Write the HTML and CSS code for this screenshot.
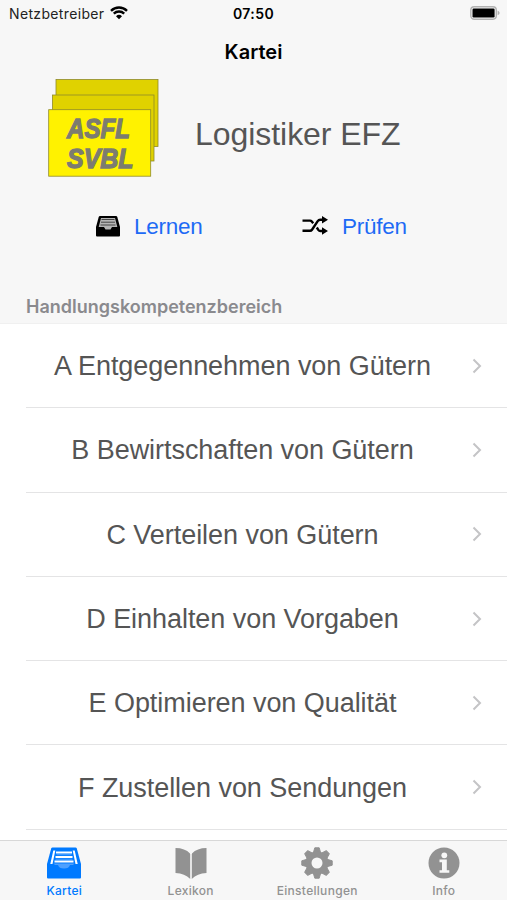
FILE: index.html
```html
<!DOCTYPE html>
<html lang="de">
<head>
    <meta charset="UTF-8">
    <meta name="viewport" content="width=device-width, initial-scale=1.0">
    <title>Kartei</title>
    <link rel="stylesheet" href="styles.css">
</head>
<body>

<div class="app">
    <div class="status-bar">
        <div class="carrier">
            <span>Netzbetreiber</span>
            <svg class="wifi" viewBox="0 0 18 14" width="18" height="14">
                <path d="M1 4.8a11.5 11.5 0 0 1 16 0M3.8 7.7a7.4 7.4 0 0 1 10.4 0" fill="none" stroke="#000" stroke-width="2.4"/>
                <path d="M6 10.2a4.3 4.3 0 0 1 6 0l-3 3z"/>
            </svg>
        </div>
        <div class="time">07:50</div>
        <svg class="battery" viewBox="0 0 31 14" width="31" height="14">
            <rect x="1.8" y=".8" width="25.5" height="12.4" rx="3.4" fill="#f7f7f7" stroke="#b2b2b2" stroke-width="1.4"/>
            <rect x="3.5" y="2.5" width="22.1" height="9" rx="1.2"/>
            <path d="M28.6 4.8c2.6.7 2.6 3.7 0 4.4z" fill="#b2b2b2"/>
        </svg>
    </div>

    <h1 class="nav-title">Kartei</h1>

    <div class="profile">
        <svg class="logo" viewBox="0 0 112 100" width="112" height="100">
            <g stroke="#8f8a2a" stroke-width=".8">
                <rect x="8" y="1.5" width="102" height="67" fill="#e0d200"/>
                <rect x="4.5" y="17" width="101.5" height="66" fill="#e0d200"/>
                <rect x=".7" y="31.7" width="102" height="66.5" fill="#fff200"/>
            </g>
            <g class="logo-text">
                <text x="19" y="59.8" textLength="63" lengthAdjust="spacingAndGlyphs">ASFL</text>
                <text x="19" y="89.5" textLength="66.5" lengthAdjust="spacingAndGlyphs">SVBL</text>
            </g>
        </svg>
        <div class="profession">Logistiker EFZ</div>
    </div>

    <div class="actions">
        <a class="action learn">
            <svg viewBox="0 0 24 22" width="24" height="22">
                <path d="M4 1h16q1 0 1.300 1L24 12v8.500q0 1-1 1H1q-1 0-1-1V12L2.700 2Q3 1 4 1z"/>
                <path d="M5 3h14l2.300 9H16l-1.500 2.500h-5L8 12H2.700z" fill="#b5b5b5"/>
                <path d="M5.500 4.500h13M5 7.200h14M4.500 10h15" stroke="#444" stroke-width="1"/>
            </svg>
            <span>Lernen</span>
        </a>
        <a class="action">
            <svg viewBox="0 0 26 20" width="26" height="20">
                <path d="M.5 4.600H8q1 0 1.800 1l1.400 1.700M.5 14.700H8q1.300 0 2-1l5.700-8.500q1-1.500 2.500-1.500H21M14.800 11.500l1.500 2.400q.8 1.100 2 1.100H21" fill="none" stroke="#000" stroke-width="2.400"/>
                <path d="M20 0l6 3.800-6 3.800zM20 11.200l6 3.800-6 3.800z"/>
            </svg>
            <span>Prüfen</span>
        </a>
    </div>

    <h2 class="section-title">Handlungskompetenzbereich</h2>

    <ul class="areas">
        <li><span>A Entgegennehmen von Gütern</span><svg class="chevron" viewBox="0 0 10 16" width="10" height="16"><path d="M1.500 1.500L8 8l-6.500 6.500"/></svg></li>
        <li><span>B Bewirtschaften von Gütern</span><svg class="chevron" viewBox="0 0 10 16" width="10" height="16"><path d="M1.500 1.500L8 8l-6.500 6.500"/></svg></li>
        <li><span>C Verteilen von Gütern</span><svg class="chevron" viewBox="0 0 10 16" width="10" height="16"><path d="M1.500 1.500L8 8l-6.500 6.500"/></svg></li>
        <li><span>D Einhalten von Vorgaben</span><svg class="chevron" viewBox="0 0 10 16" width="10" height="16"><path d="M1.500 1.500L8 8l-6.500 6.500"/></svg></li>
        <li><span>E Optimieren von Qualität</span><svg class="chevron" viewBox="0 0 10 16" width="10" height="16"><path d="M1.500 1.500L8 8l-6.500 6.500"/></svg></li>
        <li><span>F Zustellen von Sendungen</span><svg class="chevron" viewBox="0 0 10 16" width="10" height="16"><path d="M1.500 1.500L8 8l-6.500 6.500"/></svg></li>
    </ul>

    <nav class="tab-bar">
        <a class="tab active">
            <svg viewBox="0 0 34 32" width="34" height="32">
                <path d="M5.500.500h23q1 0 1.300 1L34 17v13.500q0 1-1 1H1q-1 0-1-1V17L4.200 1.500Q4.500.500 5.500.500z" fill="#007aff"/>
                <path d="M6.300 3.500h2L5.500 17H3.300zM27.700 3.500h-2L28.500 17h2.200z" fill="#fff"/>
                <path d="M9 5.500h16M8.500 10h17M7.500 14.500h19" stroke="#fff" stroke-width="2"/>
                <path d="M9.500 7.700h15M8.500 12.200h17" stroke="#4da0ff" stroke-width="1"/>
                <path d="M6.500 16.500h21l-1.500 1.500h-3q-1 3.500-6 3.500t-6-3.500H8z" fill="#4da0ff"/>
            </svg>
            <span>Kartei</span>
        </a>
        <a class="tab">
            <svg viewBox="0 0 34 32" width="34" height="32">
                <path d="M1.500 1q9.500 0 14.500 5.500v25.200Q11 26.500 1.500 26zM32.500 1Q23 1 18 6.500v25.200q5-5.200 14.500-5.700z"/>
                <path d="M17 7v25" stroke="#d0d0d0"/>
            </svg>
            <span>Lexikon</span>
        </a>
        <a class="tab">
            <svg viewBox="0 0 34 32" width="34" height="32">
                <g transform="translate(17 16)">
                    <path id="teeth" d="M-2.200-15.200h4.400L4-9h-8zM-2.200 15.200h4.400L4 9h-8zM-15.200-2.200v4.400L-9 4v-8zM15.200-2.200v4.400L9 4v-8z" stroke="#929292" stroke-linejoin="round"/>
                    <use href="#teeth" transform="rotate(45)"/>
                    <circle r="8.500" fill="none" stroke="#929292" stroke-width="6"/>
                </g>
            </svg>
            <span>Einstellungen</span>
        </a>
        <a class="tab">
            <svg viewBox="0 0 34 32" width="34" height="32">
                <circle cx="17" cy="16" r="15.500"/>
                <path d="M12.500 12.500h7.300v10.700h2.500v2.600h-9.800v-2.600H15v-8h-2.500z" fill="#f7f7f7"/>
                <circle cx="17.300" cy="8.300" r="2.900" fill="#f7f7f7"/>
            </svg>
            <span>Info</span>
        </a>
    </nav>
</div>

</body>
</html>
```
FILE: styles.css
```css
* {
    box-sizing: border-box;
}
body {
    margin: 0;
    background: #fff;
    font-family: Inter, "Liberation Sans", sans-serif;
}
.app {
    display: flex;
    flex-direction: column;
    height: 900px;
    overflow: hidden;
    background: #f7f7f7;
}
.status-bar {
    display: grid;
    grid-template-columns: 1fr auto 1fr;
    align-items: center;
    height: 28px;
    padding: 0 7px 0 9px;
    font-size: 14px;
    line-height: 20px;
}
.carrier {
    display: flex;
    align-items: center;
    gap: 6px;
    color: #222;
    letter-spacing: 0.35px;
}
.wifi {
    margin-top: -2px;
}
.time {
    margin-right: 2px;
    font-weight: 600;
    letter-spacing: 0.4px;
}
.battery {
    justify-self: end;
    margin-top: -2px;
}
.nav-title {
    height: 50px;
    margin: 0;
    font-size: 20px;
    font-weight: 600;
    line-height: 49px;
    text-align: center;
}
.profile {
    display: flex;
    height: 100px;
    padding-left: 48px;
}
.logo-text {
    fill: #7c7c70;
    stroke: #7c7c70;
    stroke-width: 1.3px;
    font: italic bold 28px "Liberation Sans", sans-serif;
}
.profession {
    margin-left: 35px;
    color: #555;
    font: 32px/112px "Liberation Sans", sans-serif;
    letter-spacing: -0.05px;
}
.actions {
    display: flex;
    height: 112px;
    padding: 28px 0 0 96px;
}
.action {
    display: flex;
    align-items: center;
    height: 40px;
    gap: 14px;
    color: #1e6af5;
    font: 22.5px "Liberation Sans", sans-serif;
    letter-spacing: -0.25px;
}
.action span {
    padding-top: 1px;
}
.learn {
    width: 206px;
}
.section-title {
    height: 33px;
    margin: 0;
    padding-left: 26px;
    color: #8a8a8e;
    font-size: 18px;
    font-weight: 600;
    line-height: 33px;
}
.areas {
    flex: 1;
    min-height: 0;
    margin: 0;
    padding: 0 0 0 26px;
    background: #fff;
    border-top: 1px solid #f0f0f0;
    list-style: none;
}
.areas li {
    display: flex;
    align-items: center;
    height: 84.3px;
    padding-right: 25px;
    border-bottom: 1px solid #e4e4e5;
    color: #555;
    font: 27px "Liberation Sans", sans-serif;
}
.areas span {
    flex: 1;
    padding: 2px 13px 0 0;
    letter-spacing: -0.05px;
    text-align: center;
}
.chevron {
    fill: none;
    stroke: #c4c4c6;
    stroke-width: 2px;
}
.tab-bar {
    display: grid;
    grid-template-columns: repeat(4, 1fr);
    height: 60px;
    padding-left: 1px;
    border-top: 1px solid #d8d8d8;
    background: #f7f7f7;
}
.tab {
    display: flex;
    flex-direction: column;
    align-items: center;
    padding-top: 6px;
    color: #929292;
    fill: #929292;
    font-size: 12px;
    font-weight: 500;
    line-height: 15px;
    letter-spacing: 0.3px;
}
.tab span {
    margin-top: 4px;
}
.active {
    color: #007aff;
}
```
